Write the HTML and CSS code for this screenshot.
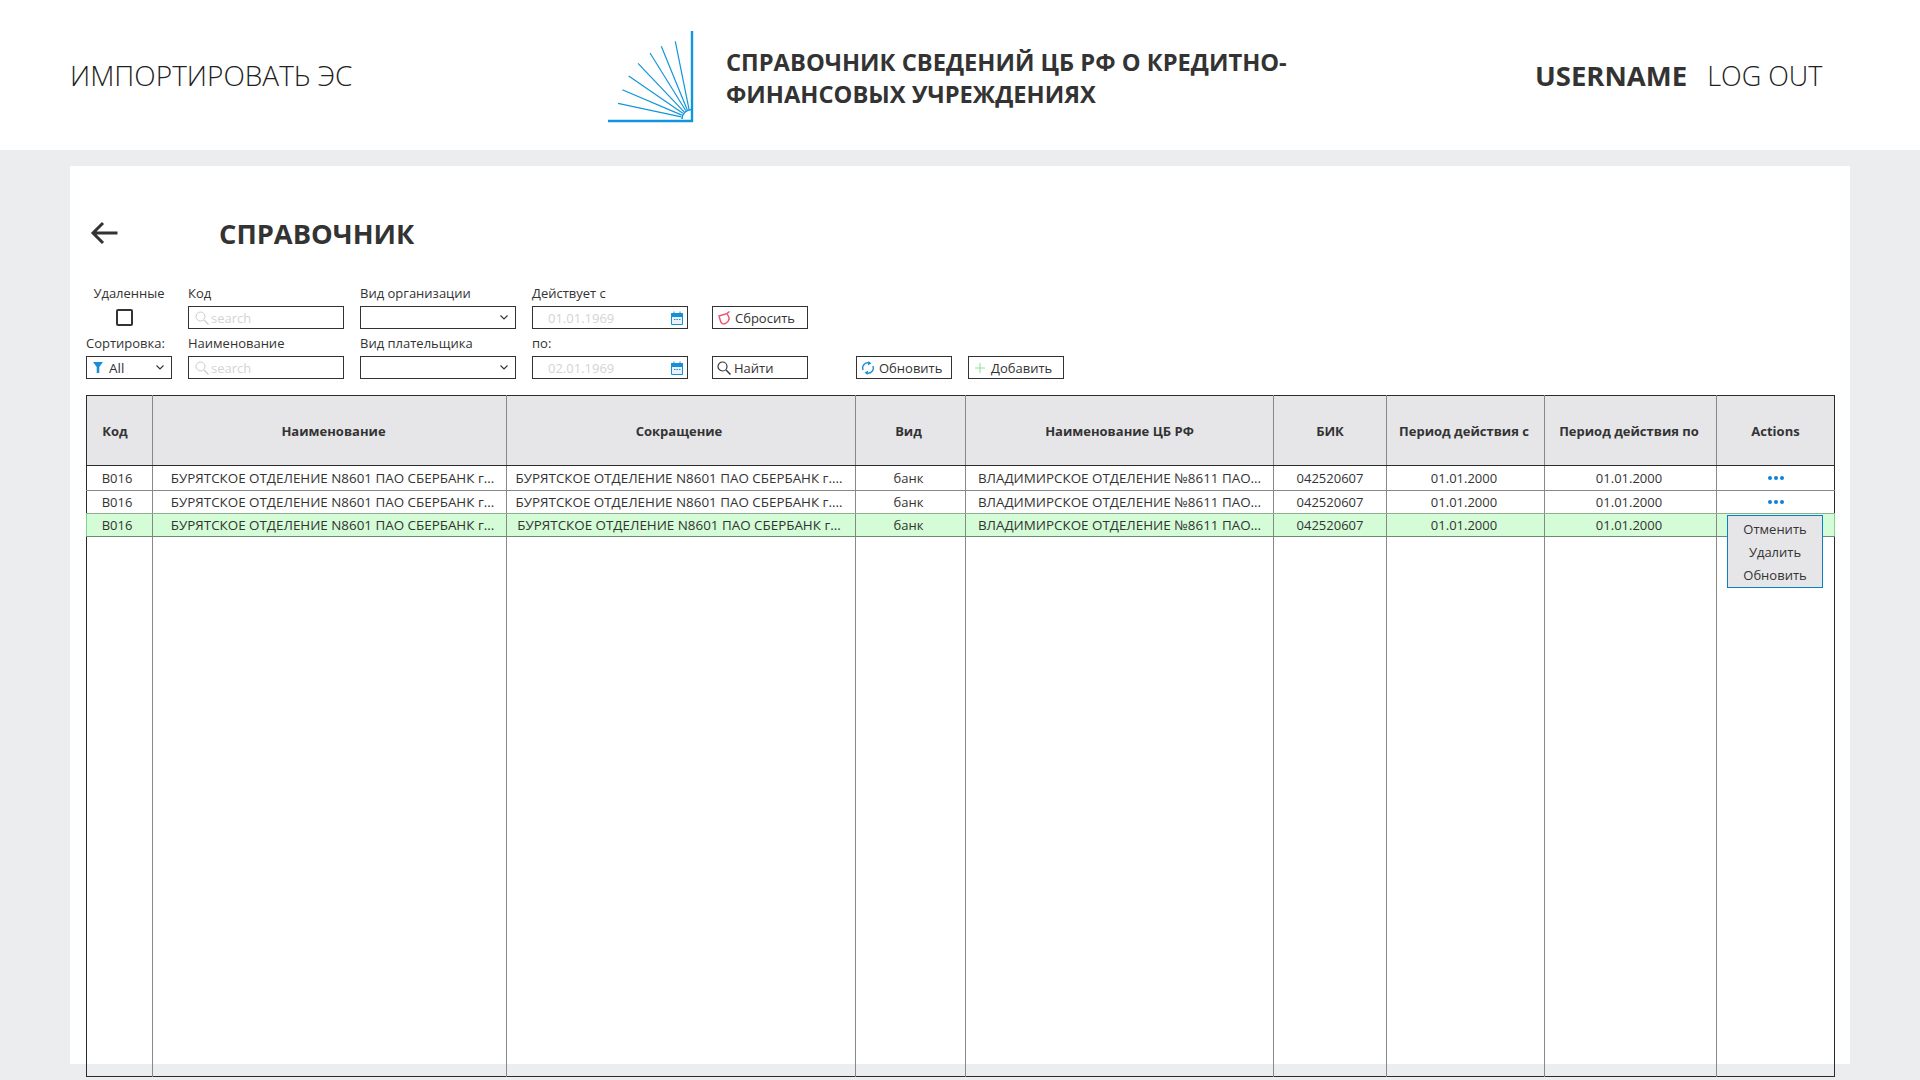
FILE: index.html
```html
<!DOCTYPE html>
<html lang="ru">

<head>
    <meta charset="UTF-8">
    <title>Справочник</title>
    <link rel="stylesheet" href="styles.css">
</head>

<body>
    <header class="topbar">
        <a class="import-link">ИМПОРТИРОВАТЬ ЭС</a>
        <div class="brand">
            <svg class="logo" width="88" height="94" viewBox="606 30 88 94">
                <g fill="none" stroke="#1296db">
                    <path stroke-width="2.4" d="M692 32V122H608" />
                    <path stroke-width="1.6" d="M682 120a9.5 9.5 0 0 1 9.5-9.5" />
                    <g stroke-width="1.2">
                        <path d="M618 104.3L681.2 117.9" />
                        <path d="M622.3 90.7L681.8 116.1" />
                        <path d="M628.7 77L682.8 114.3" />
                        <path d="M638 64.3L684.1 112.8" />
                        <path d="M650 54L685.7 111.5" />
                        <path d="M661.3 47.3L687.2 110.7" />
                        <path d="M675.3 42.3L689 110.2" />
                    </g>
                </g>
            </svg>
            <h1 class="brand-title">СПРАВОЧНИК СВЕДЕНИЙ ЦБ РФ О КРЕДИТНО-<br>ФИНАНСОВЫХ УЧРЕЖДЕНИЯХ</h1>
        </div>
        <div class="user">
            <span class="user-name">USERNAME</span>
            <a class="logout">LOG OUT</a>
        </div>
    </header>

    <main class="panel">
        <div class="page-head">
            <svg class="back" width="28" height="24" viewBox="0 0 28 24">
                <path d="M27.500 12H3M13 2L3 12l10 10" fill="none" stroke="#333" stroke-width="3" />
            </svg>
            <h2 class="page-title">СПРАВОЧНИК</h2>
        </div>

        <form class="filters">
            <div class="field field-check">
                <label>Удаленные</label>
                <span class="checkbox"></span>
            </div>
            <div class="field">
                <label>Код</label>
                <div class="box">
                    <svg class="ico-search" width="14" height="14" viewBox="0 0 14 14">
                        <circle cx="5.5" cy="5.5" r="4.5" fill="none" stroke="#ccc" />
                        <path d="M9 9l4.5 4.5" stroke="#ccc" stroke-width="1.2" />
                    </svg>
                    <span class="hint">search</span>
                </div>
            </div>
            <div class="field">
                <label>Вид организации</label>
                <div class="box box-select">
                    <svg class="chevron" width="8" height="5" viewBox="0 0 8 5"><path d="M.5.5L4 4 7.5.5" fill="none" stroke="#333" stroke-width="1.1" /></svg>
                </div>
            </div>
            <div class="field">
                <label>Действует с</label>
                <div class="box box-date">
                    <span class="hint">01.01.1969</span>
                    <svg class="calendar" width="12" height="14" viewBox="0 0 12 14">
                        <path d="M.5 2.5h11v11H.5z" fill="#e6f3fb" stroke="#1a8fd6" />
                        <path d="M.5 2.5h11v3H.5zM3 .5v2M9 .5v2" fill="#1a8fd6" stroke="#1a8fd6" />
                        <path d="M3 8.5h1.5M5.5 8.5H7M8 8.5h1.5" stroke="#1a8fd6" />
                    </svg>
                </div>
            </div>
            <div class="field field-btn">
                <button type="button" class="btn">
                    <svg class="ico-reset" width="14" height="14" viewBox="0 0 14 14">
                        <path d="M1 5L9 2.500 11 6.500C11.500 9 10 11 7.500 12.500 5 13.500 3 12.500 2.500 10z" fill="none" stroke="#f0506e" stroke-width="1.400" />
                        <path d="M9 2.500L11.500.5" stroke="#f0506e" stroke-width="1.400" />
                    </svg>
                    Сбросить
                </button>
            </div>
            <div class="field-spacer"></div>

            <div class="field">
                <label>Сортировка:</label>
                <div class="box box-sort">
                    <svg width="10" height="11" viewBox="0 0 10 11"><path d="M0 0h10L6.3 5v6H3.7V5z" fill="#1a8fd6" /></svg>
                    <span class="sort-value">All</span>
                    <svg class="chevron" width="8" height="5" viewBox="0 0 8 5"><path d="M.5.5L4 4 7.5.5" fill="none" stroke="#333" stroke-width="1.1" /></svg>
                </div>
            </div>
            <div class="field">
                <label>Наименование</label>
                <div class="box">
                    <svg class="ico-search" width="14" height="14" viewBox="0 0 14 14">
                        <circle cx="5.5" cy="5.5" r="4.5" fill="none" stroke="#ccc" />
                        <path d="M9 9l4.5 4.5" stroke="#ccc" stroke-width="1.2" />
                    </svg>
                    <span class="hint">search</span>
                </div>
            </div>
            <div class="field">
                <label>Вид плательщика</label>
                <div class="box box-select">
                    <svg class="chevron" width="8" height="5" viewBox="0 0 8 5"><path d="M.5.5L4 4 7.5.5" fill="none" stroke="#333" stroke-width="1.1" /></svg>
                </div>
            </div>
            <div class="field">
                <label>по:</label>
                <div class="box box-date">
                    <span class="hint">02.01.1969</span>
                    <svg class="calendar" width="12" height="14" viewBox="0 0 12 14">
                        <path d="M.5 2.5h11v11H.5z" fill="#e6f3fb" stroke="#1a8fd6" />
                        <path d="M.5 2.5h11v3H.5zM3 .5v2M9 .5v2" fill="#1a8fd6" stroke="#1a8fd6" />
                        <path d="M3 8.5h1.5M5.5 8.5H7M8 8.5h1.5" stroke="#1a8fd6" />
                    </svg>
                </div>
            </div>
            <div class="field field-btn">
                <button type="button" class="btn">
                    <svg width="14" height="14" viewBox="0 0 14 14">
                        <circle cx="5.5" cy="5.5" r="4.5" fill="none" stroke="#333" stroke-width="1.2" />
                        <path d="M9 9l4.5 4.5" stroke="#333" stroke-width="1.4" />
                    </svg>
                    Найти
                </button>
            </div>
            <div class="actions">
                <button type="button" class="btn">
                    <svg width="12" height="14" viewBox="0 0 12 14">
                        <path d="M1.2 9A5 5 0 0 1 7.500 2.200M10.800 5A5 5 0 0 1 4.500 11.800" fill="none" stroke="#1a8fd6" stroke-width="1.4" />
                        <path d="M6.500 0l3 2.600-3.600 1.600zM5.500 14l-3-2.600 3.600-1.600z" fill="#1a8fd6" />
                    </svg>
                    Обновить
                </button>
                <button type="button" class="btn">
                    <svg width="12" height="12" viewBox="0 0 12 12"><path d="M6 1v10M1 6h10" stroke="#8fe89a" stroke-width="1.1" /></svg>
                    Добавить
                </button>
            </div>
        </form>

        <table class="grid">
            <colgroup>
                <col class="c-code">
                <col class="c-name">
                <col class="c-short">
                <col class="c-kind">
                <col class="c-cb">
                <col class="c-bik">
                <col class="c-from">
                <col class="c-to">
                <col class="c-act">
            </colgroup>
            <thead>
                <tr>
                    <th>Код</th>
                    <th>Наименование</th>
                    <th>Сокращение</th>
                    <th>Вид</th>
                    <th>Наименование ЦБ РФ</th>
                    <th>БИК</th>
                    <th>Период действия с</th>
                    <th>Период действия по</th>
                    <th>Actions</th>
                </tr>
            </thead>
            <tbody>
                <tr class="row-first">
                    <td>В016</td>
                    <td class="long">БУРЯТСКОЕ ОТДЕЛЕНИЕ N8601 ПАО СБЕРБАНК г...</td>
                    <td class="long">БУРЯТСКОЕ ОТДЕЛЕНИЕ N8601 ПАО СБЕРБАНК г....</td>
                    <td>банк</td>
                    <td class="long">ВЛАДИМИРСКОЕ ОТДЕЛЕНИЕ №8611 ПАО...</td>
                    <td>042520607</td>
                    <td>01.01.2000</td>
                    <td>01.01.2000</td>
                    <td><span class="dots"><i></i><i></i><i></i></span></td>
                </tr>
                <tr class="row-before-active">
                    <td>В016</td>
                    <td class="long">БУРЯТСКОЕ ОТДЕЛЕНИЕ N8601 ПАО СБЕРБАНК г...</td>
                    <td class="long">БУРЯТСКОЕ ОТДЕЛЕНИЕ N8601 ПАО СБЕРБАНК г....</td>
                    <td>банк</td>
                    <td class="long">ВЛАДИМИРСКОЕ ОТДЕЛЕНИЕ №8611 ПАО...</td>
                    <td>042520607</td>
                    <td>01.01.2000</td>
                    <td>01.01.2000</td>
                    <td><span class="dots"><i></i><i></i><i></i></span></td>
                </tr>
                <tr class="row-active">
                    <td>В016</td>
                    <td class="long">БУРЯТСКОЕ ОТДЕЛЕНИЕ N8601 ПАО СБЕРБАНК г...</td>
                    <td class="long">БУРЯТСКОЕ ОТДЕЛЕНИЕ N8601 ПАО СБЕРБАНК г...</td>
                    <td>банк</td>
                    <td class="long">ВЛАДИМИРСКОЕ ОТДЕЛЕНИЕ №8611 ПАО...</td>
                    <td>042520607</td>
                    <td>01.01.2000</td>
                    <td>01.01.2000</td>
                    <td class="menu-cell">
                        <ul class="menu">
                            <li>Отменить</li>
                            <li>Удалить</li>
                            <li>Обновить</li>
                        </ul>
                    </td>
                </tr>
                <tr class="row-filler">
                    <td></td><td></td><td></td><td></td><td></td><td></td><td></td><td></td><td></td>
                </tr>
            </tbody>
        </table>
    </main>
</body>

</html>
```

FILE: styles.css
```css
* {
    box-sizing: border-box;
}

html,
body {
    height: 1080px;
    overflow: hidden;
}

body {
    margin: 0;
    background-color: #ecedef;
    color: #333;
    font-family: 'Open Sans', 'Noto Sans', sans-serif;
    font-size: 13px;
}

.topbar {
    display: grid;
    grid-template-columns: 536px 929px 1fr;
    align-items: center;
    height: 150px;
    padding: 0 70px;
    background: #fff;
}

.import-link {
    color: #222;
    font-size: 28px;
    font-weight: 300;
}

.logout {
    color: #222;
    font-size: 27px;
    font-weight: 300;
}

.brand {
    display: flex;
    align-items: center;
    gap: 32px;
}

.logo {
    flex: none;
    margin-top: 2px;
}

.brand-title {
    margin: 6px 0 0;
    font-size: 23.7px;
    line-height: 32px;
    font-weight: 700;
}

.user {
    display: flex;
    align-items: center;
    gap: 20px;
}

.user-name {
    font-size: 27.5px;
    font-weight: 700;
}

.panel {
    height: 898px;
    margin: 16px 70px 0;
    padding: 0 16px;
    background: #fff;
}

.page-head {
    display: flex;
    align-items: center;
    height: 117px;
    padding: 17px 0 0 4px;
}

.back {
    margin-right: 101px;
}

.page-title {
    margin: 0;
    font-size: 27.3px;
    font-weight: 700;
}

/* filters */
.filters {
    display: grid;
    grid-template-columns: 86px 156px 156px 156px 96px 1fr;
    grid-template-rows: 46px 46px;
    column-gap: 16px;
    row-gap: 4px;
    height: 112px;
}

.filters > :nth-child(5),
.filters > :nth-child(11) {
    margin-left: 8px;
}

.field {
    display: flex;
    flex-direction: column;
}

.field label {
    height: 23px;
    line-height: 20px;
    white-space: nowrap;
}

.field-check {
    align-items: center;
}

.checkbox {
    width: 17px;
    height: 17px;
    margin: 3px 9px 0 0;
    border: 2px solid #333;
    border-radius: 2px;
}

.field-btn {
    justify-content: flex-end;
}

.box {
    display: flex;
    align-items: center;
    height: 23px;
    padding: 0 6px;
    border: 1px solid #333;
    background: #fff;
}

.ico-search {
    margin-right: 2px;
}

.hint {
    color: #d4d4d4;
}

.box-select,
.box-sort {
    position: relative;
}

.chevron {
    position: absolute;
    top: 8px;
    right: 7px;
}

.sort-value {
    margin-left: 6px;
    font-size: 13.5px;
}

.box-date {
    justify-content: space-between;
    padding: 0 4px 0 15px;
}

.btn {
    display: flex;
    align-items: center;
    gap: 3px;
    width: 96px;
    height: 23px;
    padding: 0 4px;
    border: 1px solid #333;
    background: #fff;
    color: #333;
    font: inherit;
}

.ico-reset {
    margin-left: 1px;
}

.actions {
    display: flex;
    align-items: flex-end;
    gap: 16px;
    margin-left: 40px;
}

.actions .btn {
    gap: 5px;
    padding: 0 5px;
}

/* table */
.grid {
    width: 1748px;
    height: 682px;
    table-layout: fixed;
    border-collapse: collapse;
    border: 1px solid #2b2b2b;
}

.c-code { width: 66px; }
.c-name { width: 354px; }
.c-short { width: 349px; }
.c-kind { width: 110px; }
.c-cb { width: 308px; }
.c-bik { width: 113px; }
.c-from { width: 158px; }
.c-to { width: 172px; }
.c-act { width: 118px; }

.grid th {
    height: 70px;
    padding: 0;
    background: #e6e6e9;
    border-right: 1px solid #888;
    border-bottom: 1px solid #2b2b2b;
    font-weight: 700;
}

.grid td {
    height: 23px;
    padding: 0;
    border-right: 1px solid #888;
    border-bottom: 1px solid #888;
    text-align: center;
    white-space: nowrap;
}

.grid .long {
    font-size: 13.4px;
}

/* text in the first columns sits a little off the cell centre */
.grid th:nth-child(1) {
    padding-right: 9px;
}

.grid td:nth-child(1) {
    padding-right: 5px;
}

.grid th:nth-child(2) {
    padding-left: 8px;
}

.grid td:nth-child(2) {
    padding-left: 6px;
}

.grid tr > :nth-child(3) {
    padding-right: 4px;
}

.grid tr > :nth-child(4) {
    padding-right: 4px;
}

.grid tr > :nth-child(7),
.grid tr > :nth-child(8) {
    padding-right: 3px;
}

.grid th:last-child,
.grid td:last-child {
    border-right: 0;
}

.grid .row-first td {
    height: 25px;
}

.grid .row-before-active td {
    border-bottom-color: #8fae92;
}

.grid .row-active td {
    background: #d4fcd6;
    border-bottom-color: #6d8a72;
}

.grid .row-active td:first-child {
    border-left: 1px solid #7fd688;
}

.grid .row-active td:last-child {
    border-right: 1px solid #7fd688;
}

.grid .row-filler td {
    height: auto;
    border-bottom: 0;
    background: transparent;
}

.dots {
    display: inline-flex;
    gap: 2px;
    vertical-align: 3px;
}

.dots i {
    width: 4px;
    height: 4px;
    border-radius: 50%;
    background: #0a84d6;
}

.grid .menu-cell {
    position: relative;
}

.menu {
    position: absolute;
    top: 1px;
    left: 10px;
    z-index: 2;
    width: 96px;
    margin: 0;
    padding: 2px 0 0;
    list-style: none;
    background: #e6e6e9;
    border: 1px solid #0a7fc4;
}

.menu li {
    height: 23px;
    line-height: 22px;
}
```
